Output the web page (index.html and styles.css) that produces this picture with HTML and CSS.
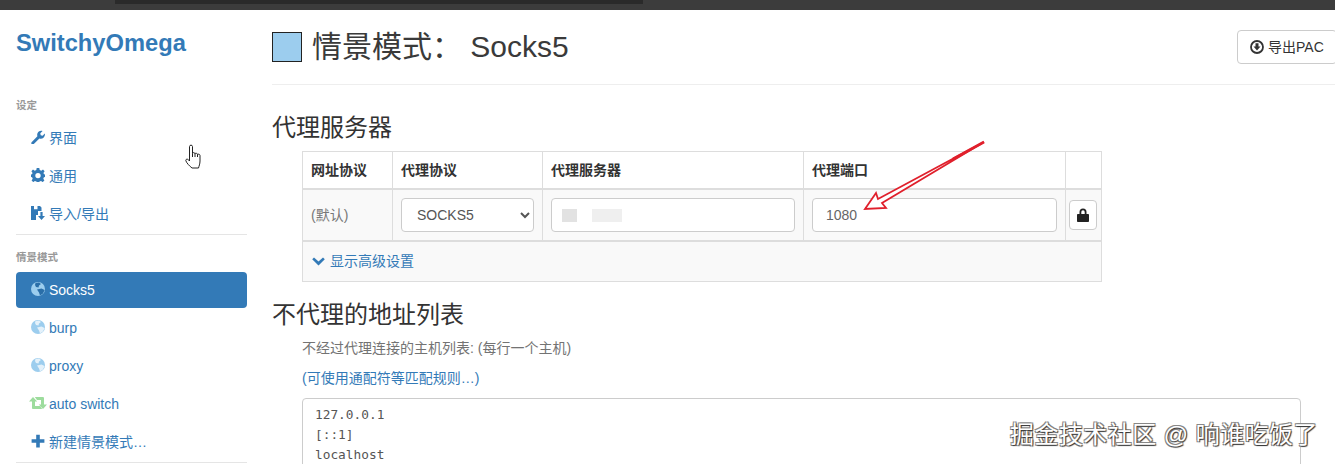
FILE: index.html
```html
<!DOCTYPE html>
<html lang="zh">
<head>
<meta charset="utf-8">
<title>SwitchyOmega</title>
<link rel="stylesheet" href="styles.css">
</head>
<body>
<div class="topbar"><div class="topbar-dark"></div></div>
<div class="app">
  <aside class="side">
    <h1 class="brand">SwitchyOmega</h1>
    <div class="nav-head first">设定</div>
    <a class="nav"><svg class="ico" viewBox="0 0 14 14"><path fill="#337ab7" d="M0.6 12.200 6.400 6.300C5.900 4.600 6.300 2.900 7.500 1.800 8.600 .8 10.200 .5 11.600 1L9.300 3.300 9.700 5.200 11.600 5.700 13.800 3.400C14.200 4.900 13.800 6.400 12.700 7.500 11.600 8.600 10 9 8.400 8.500L2.600 14.200C2 14.700 1.200 14.700 .7 14.100 .1 13.600 .1 12.700 .6 12.200Z"/></svg>界面</a>
    <a class="nav"><svg class="ico" viewBox="0 0 14 14"><path fill="#337ab7" fill-rule="evenodd" d="M5.700 0H8.300L8.700 2 10.300 2.700 12 1.500 13.600 3.200 12.400 4.900 13.100 6.300 14 6.600V9L12.900 9.300 12.300 10.800 13.400 12.500 11.700 14.100 10 13 8.500 13.600 8.200 14H5.800L5.400 13.600 3.900 13 2.200 14.100.6 12.500 1.700 10.800 1.100 9.300 0 9V6.600L.9 6.300 1.600 4.900.4 3.200 2 1.500 3.700 2.700 5.300 2ZM7 4.900A2.700 2.700 0 1 0 7 10.300 2.700 2.700 0 1 0 7 4.900Z"/></svg>通用</a>
    <a class="nav"><svg class="ico" viewBox="0 0 14 14"><path fill="#337ab7" fill-rule="evenodd" d="M0 0H9L10.500 1.500V5H7V9H5V14H0ZM3 0V3.200H6.500V0ZM9.400 6H11.600V10H14L10.500 14 7 10H9.400Z"/></svg>导入/导出</a>
    <hr class="nav-rule">
    <div class="nav-head">情景模式</div>
    <a class="nav active"><svg class="ico" viewBox="0 0 14 14"><circle cx="7" cy="7" r="7" fill="#9ccdee"/><path fill="#2a6ea8" d="M4.500 1 8 .4 10 2 8 3.500 7.500 5.500 5 5 4 3ZM6 7.500 10.500 6.500 13.600 8 12 11.500 9 13.500 8 10.500Z"/></svg>Socks5</a>
    <a class="nav"><svg class="ico" viewBox="0 0 14 14"><circle cx="7" cy="7" r="7" fill="#9ccdee"/><path fill="#e4f1fa" d="M4.500 1 8 .4 10 2 8 3.500 7.500 5.500 5 5 4 3ZM6 7.500 10.500 6.500 13.600 8 12 11.500 9 13.500 8 10.500Z"/></svg>burp</a>
    <a class="nav"><svg class="ico" viewBox="0 0 14 14"><circle cx="7" cy="7" r="7" fill="#9ccdee"/><path fill="#e4f1fa" d="M4.500 1 8 .4 10 2 8 3.500 7.500 5.500 5 5 4 3ZM6 7.500 10.500 6.500 13.600 8 12 11.500 9 13.500 8 10.500Z"/></svg>proxy</a>
    <a class="nav"><svg class="ico ico-wide" viewBox="0 0 18 12"><path fill="#9ddc9d" d="M4 0 8.200 4.500H6V9H11L13.200 12H4.300C3.300 12 3 11.400 3 10.700V4.500H0ZM5.800 0H13.700C14.700 0 15 .6 15 1.300V7.500H18L14 12 9.800 7.500H12V3H8Z"/></svg>auto switch</a>
    <a class="nav"><svg class="ico" viewBox="0 0 14 14"><path fill="#337ab7" d="M5.200 .8H8.800V5.200H13.400V8.800H8.800V13.400H5.200V8.800H.6V5.200H5.200Z"/></svg>新建情景模式…</a>
    <hr class="nav-rule">
  </aside>
  <main class="main">
    <header class="page-head">
      <span class="swatch"></span>
      <h2 class="page-title">情景模式： <span class="page-name">Socks5</span></h2>
      <button class="pac" type="button"><svg class="pac-ico" viewBox="0 0 14 14"><circle cx="7" cy="7" r="6" fill="none" stroke="#333" stroke-width="1.800"/><path fill="#333" d="M5.500 3.200H8.500V6.500H10.500L7 10.500 3.500 6.500H5.500Z"/></svg>导出PAC</button>
    </header>
    <h3 class="sec sec-proxy">代理服务器</h3>
    <table class="grid">
      <colgroup><col class="c1"><col class="c2"><col class="c3"><col class="c4"><col class="c5"></colgroup>
      <thead>
        <tr><th>网址协议</th><th>代理协议</th><th>代理服务器</th><th>代理端口</th><th></th></tr>
      </thead>
      <tbody>
        <tr class="row">
          <td class="muted">(默认)</td>
          <td><select class="field sel"><option>SOCKS5</option></select></td>
          <td><div class="field host"><span class="blur b1"></span><span class="blur b2"></span></div></td>
          <td><input class="field port" type="text" value="1080"></td>
          <td class="lock-cell"><button class="lock" type="button"><svg class="lock-ico" viewBox="0 0 12 14"><path fill="#222" fill-rule="evenodd" d="M1 6H2.500V4A3.500 3.500 0 0 1 9.500 4V6H11C11.500 6 12 6.400 12 7V13C12 13.600 11.500 14 11 14H1C.5 14 0 13.600 0 13V7C0 6.400.5 6 1 6ZM4.300 6H7.700V4A1.700 1.700 0 0 0 4.300 4Z"/></svg></button></td>
        </tr>
        <tr class="row">
          <td colspan="5" class="adv"><svg class="chev" viewBox="0 0 14 10"><path fill="#337ab7" d="M0 2.500 2 .5 7 5 12 .5 14 2.500 7 9.500Z"/></svg><a class="link">显示高级设置</a></td>
        </tr>
      </tbody>
    </table>
    <h3 class="sec sec-bypass">不代理的地址列表</h3>
    <div class="bypass">
      <p class="help">不经过代理连接的主机列表: (每行一个主机)</p>
      <p class="wild"><a class="link">(可使用通配符等匹配规则…)</a></p>
      <div class="area">127.0.0.1
[::1]
localhost</div>
    </div>
  </main>
</div>
<svg class="hand" viewBox="0 0 18 25"><path fill="#fff" stroke="#222" stroke-width="1" stroke-linejoin="round" d="M4.500 2.500C4.500 .7 7.500 .7 7.500 2.500V9.500C7.500 8.300 10 8.300 10 9.800 10 9 12.500 9 12.500 10.500 12.500 9.800 15 10 15 11.500V17C15 20 14 22 13.500 24H7C5 22.500 1 18.500 .8 16.500 .7 15 2.500 14.800 3.500 15.800L4.500 17Z"/><path fill="none" stroke="#222" stroke-width="1" d="M7.500 9.500V13M10 9.800V13M12.500 10.500V13"/></svg>
<svg class="arrow" viewBox="0 0 140 85"><path fill="#fff" stroke="#e0202c" stroke-width="1.800" stroke-linejoin="miter" d="M129 7 23 64 21 58 10 74 31 73 27 68Z"/><path fill="none" stroke="#e0202c" stroke-width="2.600" d="M129 7 98 24"/></svg>
<div class="mark">掘金技术社区 @ 响谁吃饭了</div>
</body>
</html>
```
FILE: styles.css
```css
* { box-sizing: border-box; }
html, body { margin: 0; padding: 0; height: 464px; overflow: hidden; }
body { position: relative; background: #fff; color: #333; font: 14px/20px "Liberation Sans", "Noto Sans CJK SC", sans-serif; }
.topbar { height: 10px; background: #3c3c3c; }
.topbar-dark { height: 4px; width: 528px; margin-left: 115px; background: #2a2a2a; }
.app { display: flex; height: 454px; overflow: hidden; }
.side { width: 272px; flex: none; padding: 0 25px 0 16px; }
.brand { margin: 19px 0 0; font-size: 23.700px; line-height: 29px; font-weight: 700; color: #337ab7; }
.nav-head { font-size: 10.500px; line-height: 14px; font-weight: 700; color: #999; margin-top: 15px; }
.nav-head.first { margin-top: 40px; }
.nav { display: flex; align-items: center; height: 36px; margin-top: 2px; padding-left: 15px; border-radius: 4px; color: #337ab7; }
.nav-head + .nav { margin-top: 8px; }
.nav.active { background: #337ab7; color: #fff; }
.ico { width: 14px; height: 14px; margin-right: 4px; flex: none; position: relative; top: -1px; }
.ico-wide { width: 18px; height: 12px; margin: 0 2px 0 -2px; }
.nav-rule { margin: 2px 0 0; height: 0; border: 0; border-top: 1px solid #e5e5e5; }
.nav-rule + .nav-head { margin-top: 15px; }
.main { flex: 1; min-width: 0; }
.page-head { display: flex; align-items: center; height: 75px; padding-top: 20px; padding-bottom: 21px; border-bottom: 1px solid #eee; }
.swatch { width: 30px; height: 30px; flex: none; background: #9ccdee; border: 1px solid #222; }
.page-title { margin: 0 0 0 10px; flex: 1; font-size: 30px; line-height: 34px; font-weight: 400; white-space: pre; color: #3a3a3a; }
.pac { display: flex; align-items: center; height: 34px; width: 100px; margin-right: -2px; padding: 0 0 0 12px; flex: none; background: #fff; border: 1px solid #ccc; border-radius: 4px; color: #333; font: inherit; font-size: 14px; }
.pac-ico { width: 14px; height: 14px; margin-right: 4px; }
.sec { margin: 0; font-size: 24px; line-height: 26px; font-weight: 400; }
.sec-proxy { margin-top: 30px; }
.grid { width: 799px; margin: 10px 0 0 30px; border-collapse: collapse; table-layout: fixed; }
.c1 { width: 90px; } .c2 { width: 150px; } .c3 { width: 261px; } .c4 { width: 262px; } .c5 { width: 36px; }
.grid th, .grid td { border: 1px solid #ddd; padding: 8px; text-align: left; }
.grid th { height: 37px; font-size: 14px; font-weight: 700; border-bottom-width: 2px; color: #333; }
.row td { background: #f9f9f9; height: 52px; vertical-align: middle; }
.row + .row td { height: 40px; padding-top: 0; padding-bottom: 0; border-top-width: 2px; }
.muted { color: #777; }
.field { display: block; width: 100%; height: 34px; border: 1px solid #ccc; border-radius: 4px; background: #fff; color: #555; font: inherit; padding: 6px 12px; }
.sel { padding: 6px 11px; }
.port { padding-left: 13px; color: #666; }
.host { display: flex; align-items: center; padding-left: 10px; }
.blur { display: block; height: 13px; }
.b1 { width: 15px; background: #e2e2e2; }
.b2 { width: 30px; margin-left: 15px; background: #efefef; }
.grid .lock-cell { padding: 0 2px 0 0; text-align: center; }
.lock { display: inline-flex; align-items: center; justify-content: center; width: 28px; height: 30px; padding: 0; background: #fff; border: 1px solid #ccc; border-radius: 4px; vertical-align: middle; }
.lock-ico { width: 12px; height: 14px; }
.grid .adv { padding-left: 9px; }
.chev { width: 13px; height: 9px; margin-right: 5px; }
.link { color: #337ab7; }
.sec-bypass { margin-top: 20px; }
.bypass { margin: 0 34px 0 30px; }
.help { margin: 10px 0 0; color: #737373; }
.wild { margin: 10px 0 0; }
.area { margin-top: 10px; height: 120px; padding: 6px 12px; border: 1px solid #ccc; border-radius: 4px; background: #fff; color: #555; font: 12.800px/20px "DejaVu Sans Mono", monospace; white-space: pre; }
.hand { position: absolute; left: 185px; top: 144px; width: 18px; height: 25px; }
.arrow { position: absolute; left: 855px; top: 135px; width: 140px; height: 85px; }
.mark { position: absolute; left: 1010px; top: 421px; font-size: 24px; line-height: 28px; color: #fff; letter-spacing: .45px; white-space: nowrap; text-shadow: 1px 1px 1px #333, -1px -1px 0 #888, 1px -1px 0 #888, -1px 1px 0 #888; }
```
